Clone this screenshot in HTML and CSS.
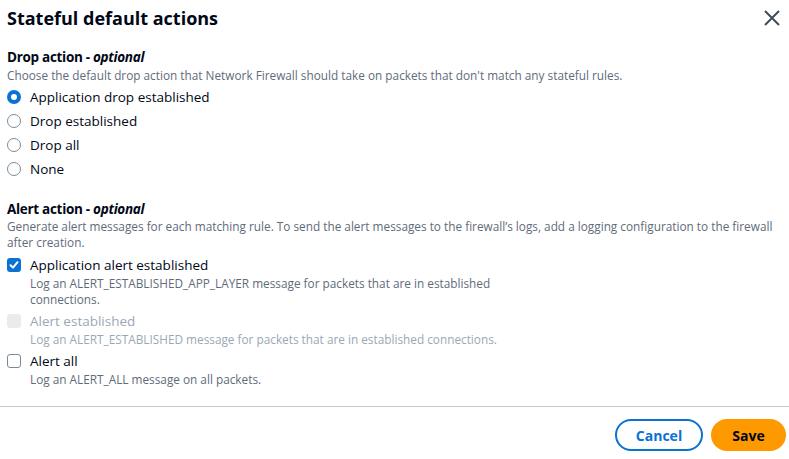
FILE: index.html
```html
<!DOCTYPE html>
<html lang="en">
<head>
<meta charset="utf-8">
<title>Stateful default actions</title>
<link rel="stylesheet" href="styles.css">
</head>
<body>
<div class="modal">
  <div class="header">
    <h2 class="title">Stateful default actions</h2>
    <button class="close" aria-label="Close">
      <svg width="16" height="16" viewBox="0 0 16 16"><path d="M1 1 L15 15 M15 1 L1 15" stroke="#414d5c" stroke-width="2" fill="none"/></svg>
    </button>
  </div>
  <div class="content">
    <section class="field">
      <div class="label">Drop action - <i>optional</i></div>
      <div class="desc">Choose the default drop action that Network Firewall should take on packets that don't match any stateful rules.</div>
      <div class="radios">
        <label class="radio"><span class="dot checked"></span><span>Application drop established</span></label>
        <label class="radio"><span class="dot"></span><span>Drop established</span></label>
        <label class="radio"><span class="dot"></span><span>Drop all</span></label>
        <label class="radio"><span class="dot"></span><span>None</span></label>
      </div>
    </section>
    <section class="field alert">
      <div class="label">Alert action - <i>optional</i></div>
      <div class="desc">Generate alert messages for each matching rule. To send the alert messages to the firewall’s logs, add a logging configuration to the firewall after creation.</div>
      <div class="checks">
        <div class="check">
          <div class="check-row"><span class="box checked"><svg width="14" height="14" viewBox="0 0 14 14"><path d="M3.5 7.2 L6 9.6 L10.5 4.2" stroke="#fff" stroke-width="2" fill="none" stroke-linecap="round" stroke-linejoin="round"/></svg></span><span>Application alert established</span></div>
          <div class="check-desc">Log an ALERT_ESTABLISHED_APP_LAYER message for packets that are in established connections.</div>
        </div>
        <div class="check disabled">
          <div class="check-row"><span class="box"></span><span>Alert established</span></div>
          <div class="check-desc">Log an ALERT_ESTABLISHED message for packets that are in established connections.</div>
        </div>
        <div class="check">
          <div class="check-row"><span class="box"></span><span>Alert all</span></div>
          <div class="check-desc">Log an ALERT_ALL message on all packets.</div>
        </div>
      </div>
    </section>
  </div>
  <div class="footer">
    <button class="btn cancel">Cancel</button>
    <button class="btn save">Save</button>
  </div>
</div>
</body>
</html>
```
FILE: styles.css
```css
* { box-sizing: border-box; }
html, body { margin: 0; padding: 0; background: #fff; }
body {
  font-family: "Open Sans", "Noto Sans", sans-serif;
  color: #000716;
  font-size: 13.5px;
}
.modal { width: 789px; }
.header {
  display: flex;
  justify-content: space-between;
  align-items: center;
  padding: 7px 9px 0 7px;
}
.title {
  margin: 0;
  font-size: 18px;
  line-height: 22px;
  font-weight: 700;
}
.close {
  border: 0;
  background: none;
  padding: 0;
  width: 16px;
  height: 16px;
  display: flex;
}
.content { padding: 0 7px; }
.field { margin-top: 19px; }
.field.alert { margin-top: 19px; }
.label {
  font-weight: 700;
  font-size: 13.5px;
  line-height: 18px;
  letter-spacing: -0.3px;
}
.label i { font-weight: 700; }
.desc {
  font-size: 11.8px;
  line-height: 16px;
  color: #5f6b7a;
}
.field:first-child .desc { margin-top: 1px; }
.radios { display: flex; flex-direction: column; margin-top: 2px; }
.radio {
  display: flex;
  align-items: center;
  gap: 9px;
  height: 24px;
}
.dot {
  width: 14px;
  height: 14px;
  border-radius: 50%;
  border: 1px solid #7d8998;
  flex: none;
}
.dot.checked { border: 4px solid #0972d3; }
.checks { display: flex; flex-direction: column; gap: 4px; margin-top: 5px; }
.check-row {
  display: flex;
  align-items: center;
  gap: 9px;
  height: 20px;
}
.box {
  width: 14px;
  height: 14px;
  border-radius: 3px;
  border: 1px solid #7d8998;
  flex: none;
  display: flex;
}
.box.checked { background: #0972d3; border: 0; }
.check-desc {
  margin-left: 23px;
  max-width: 500px;
  font-size: 11.8px;
  line-height: 16px;
  color: #5f6b7a;
}
.check.disabled .check-row { color: #9ba7b6; }
.check.disabled .box { background: #e9ebed; border-color: #e9ebed; }
.check.disabled .check-desc { color: #9ba7b6; }
.footer {
  margin-top: 19px;
  border-top: 1px solid #c6c6cd;
  display: flex;
  justify-content: flex-end;
  gap: 8px;
  padding: 12px 3px 0 0;
}
.btn {
  height: 32px;
  border-radius: 16px;
  font-family: inherit;
  font-weight: 700;
  font-size: 14px;
  padding: 0;
}
.cancel {
  width: 88px;
  background: #fff;
  border: 2px solid #0972d3;
  color: #0972d3;
}
.save {
  width: 75px;
  background: #ff9900;
  border: 2px solid #ff9900;
  color: #000716;
}
```
